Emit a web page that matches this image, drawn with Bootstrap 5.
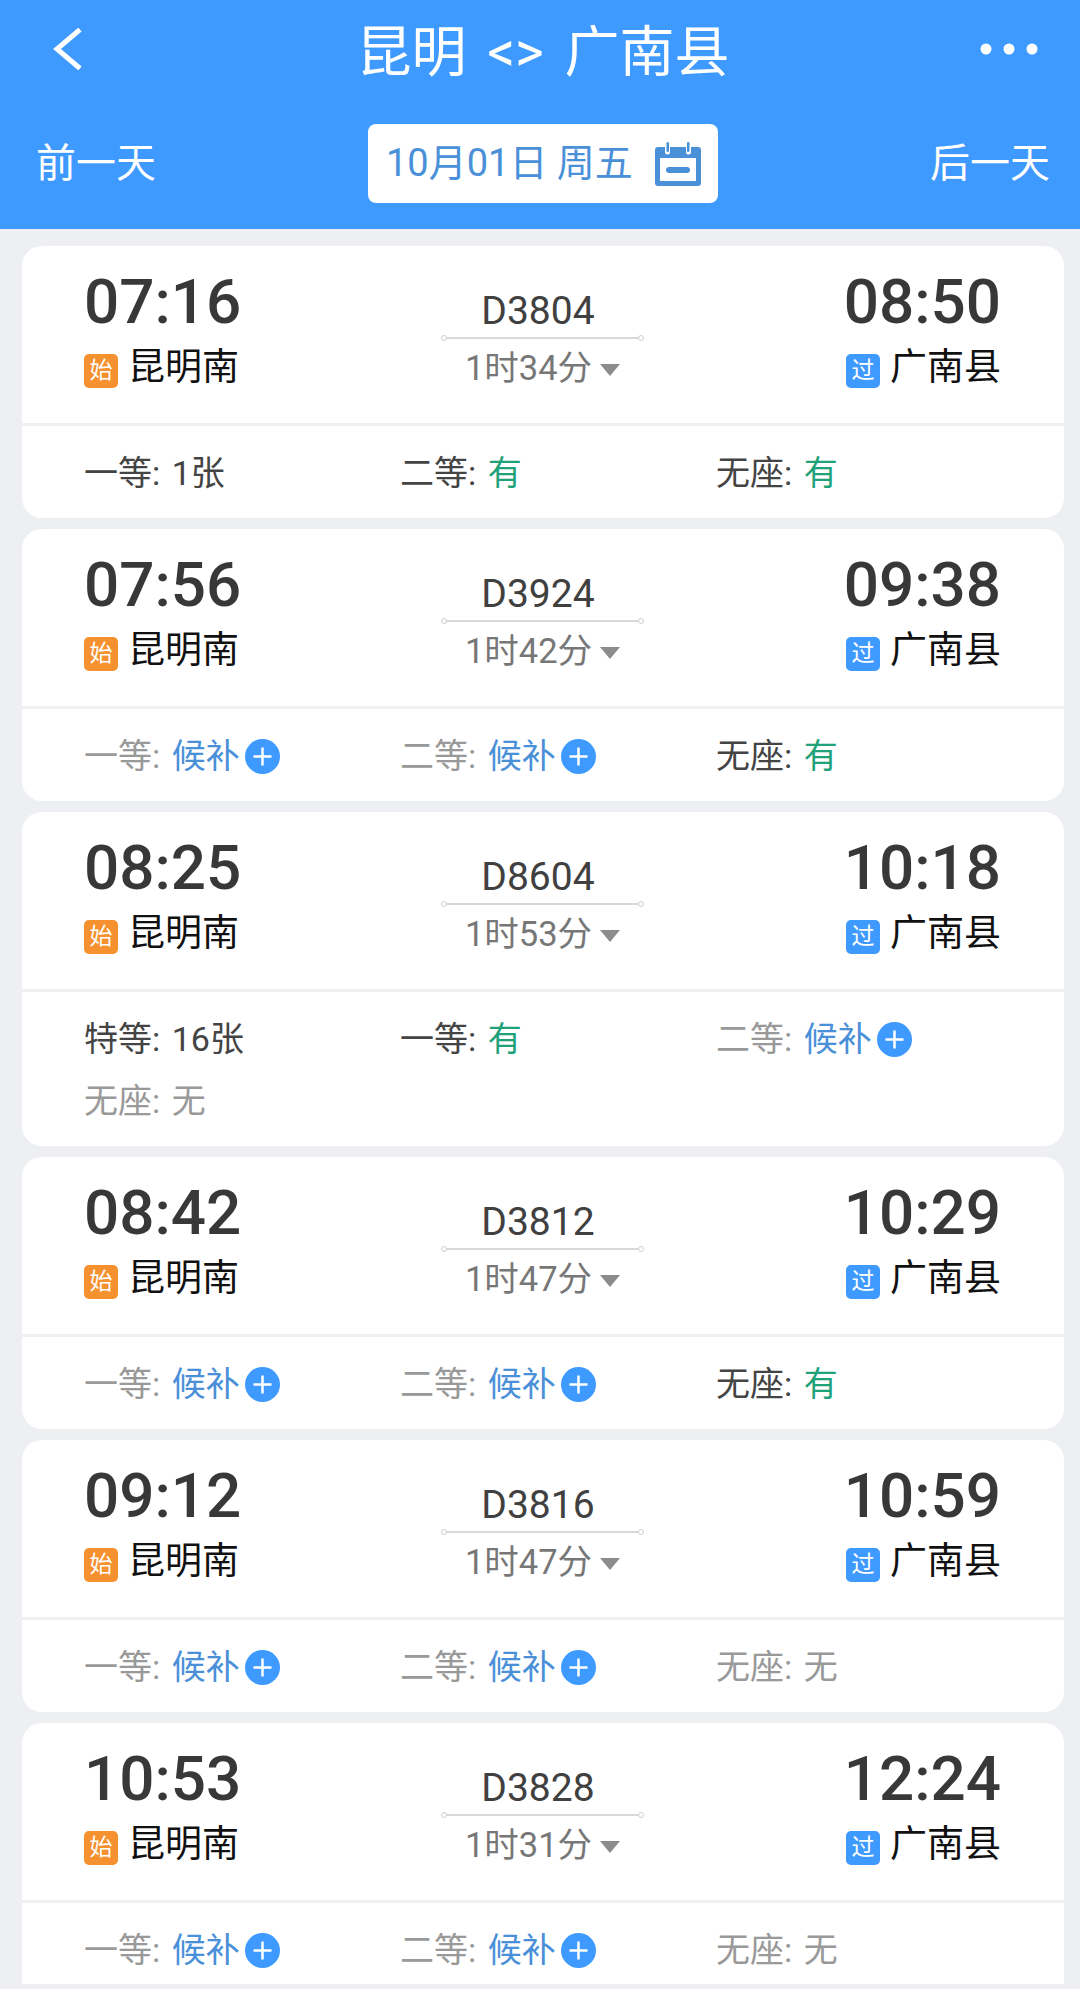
<!DOCTYPE html>
<html lang="zh-CN">
<head>
  <meta charset="UTF-8">
  <title>昆明 &lt;&gt; 广南县</title>
  <link href="https://cdn.jsdelivr.net/npm/bootstrap@5.3.3/dist/css/bootstrap.min.css" rel="stylesheet">
  <script src="https://cdn.jsdelivr.net/npm/bootstrap@5.3.3/dist/js/bootstrap.bundle.min.js"></script>
  <style>
    html, body { height: 1989px; overflow: hidden; }
    body { background: #eeeff3; font-family: Roboto, "Noto Sans CJK SC", sans-serif; color: #333; }
    .top-bar { background: #3e9aff; height: 229px; color: #fff; }
    .title-row { height: 111px; padding: 0 42px 14px 53px; }
    .title-row h1 { font-size: 55px; font-weight: 400; margin: 8px 0 0 24px; line-height: 1; }
    .title-row h1 span { margin: 0 7px; }
    .day-row { height: 105px; padding: 0 30px 0 36px; font-size: 40px; }
    .date-box { width: 350px; height: 79px; background: #fff; border-radius: 8px; color: #4a90d9; font-size: 38px; padding: 0 17px 0 18px; }
    .train-list { padding: 17px 16px 0 22px; gap: 11px; }
    .train-card { border: 0; border-radius: 20px; background: #fff; }
    .train-card:last-child { height: 261px; overflow: hidden; border-radius: 20px 20px 0 0; }
    .train-main { height: 180px; padding: 0 63px 0 62px; border-bottom: 3px solid #f0f0f3; }
    .train-end { width: 300px; }
    .clock { font-size: 62px; font-weight: 500; line-height: 72px; margin-top: 20px; color: #383838; }
    .station { font-size: 37px; line-height: 44px; color: #111; margin-top: 8px; gap: 10px; }
    .stop-tag { width: 34px; height: 34px; border-radius: 5px; color: #fff; font-size: 23px; line-height: 34px; text-align: center; margin-top: 5px; }
    .tag-start { background: #f5912f; }
    .tag-pass { background: #3e9aff; }
    .train-mid { width: 203px; text-align: center; }
    .train-no { font-size: 39px; font-weight: 400; line-height: 42px; margin-top: 44px; padding-right: 9px; color: #404040; }
    .track { height: 2px; background: #d9d9d9; margin: 5px 0 0; position: relative; }
    .track::before, .track::after { content: ""; position: absolute; top: -2px; width: 6px; height: 6px; border: 1px solid #cfcfcf; border-radius: 50%; background: #fff; }
    .track::before { left: 0; }
    .track::after { right: 0; }
    .duration { font-size: 34.500px; line-height: 44px; color: #777; margin-top: 7px; gap: 8px; }
    .down-arrow { width: 0; height: 0; border-left: 10px solid transparent; border-right: 10px solid transparent; border-top: 12px solid #8c8c8c; margin-top: 4px; }
    .seat-wrap { padding: 16px 0 14px 62px; }
    .seat-wrap .row { --bs-gutter-x: 0; width: 948px; }
    .seat { height: 62px; font-size: 34px; color: #444; white-space: nowrap; }
    .seat.off { color: #999; }
    .seat-val { margin-left: 3px; }
    .seat-yes { color: #1fa27a; }
    .seat-wait { color: #4a90d9; }
    .plus-dot { display: inline-flex; width: 35px; height: 35px; margin-left: 5px; }
  </style>
</head>
<body>

<!-- 顶部 -->
<div class="top-bar">
  <div class="title-row d-flex align-items-center justify-content-between">
    <svg width="29" height="42" viewBox="0 0 29 42"><path d="M27 1.500 4 21l23 19.500" fill="none" stroke="#fff" stroke-width="5"/></svg>
    <h1>昆明<span> &lt;&gt; </span>广南县</h1>
    <svg width="58" height="14" viewBox="0 0 58 14" fill="#fff"><circle cx="6" cy="7" r="5.500"/><circle cx="29" cy="7" r="5.500"/><circle cx="52" cy="7" r="5.500"/></svg>
  </div>
  <div class="day-row d-flex align-items-center justify-content-between">
    <span>前一天</span>
    <div class="date-box d-flex align-items-center justify-content-between">
      <span>10月01日 周五</span>
      <svg width="46" height="46" viewBox="0 0 46 46">
        <path d="M3 6h7v5a2.500 2.500 0 0 0 5 0V6h16v5a2.500 2.500 0 0 0 5 0V6h7a3 3 0 0 1 3 3v33a3 3 0 0 1-3 3H3a3 3 0 0 1-3-3V9a3 3 0 0 1 3-3Zm2 11v23h36V17Z" fill="#4a90d9"/>
        <rect x="11" y="26" width="24" height="6" rx="3" fill="#4a90d9"/>
        <rect x="11.500" y="1" width="2.500" height="10" rx="1.200" fill="#4a90d9"/>
        <rect x="32" y="1" width="2.500" height="10" rx="1.200" fill="#4a90d9"/>
      </svg>
    </div>
    <span>后一天</span>
  </div>
</div>

<!-- 车次列表 -->
<div class="train-list d-flex flex-column" id="trainList"></div>

<script>
const trenes = [
  { ini: "07:16", fin: "08:50", no: "D3804", dur: "1时34分", seats: [["一等", "1张"], ["二等", "有"], ["无座", "有"]] },
  { ini: "07:56", fin: "09:38", no: "D3924", dur: "1时42分", seats: [["一等", "候补"], ["二等", "候补"], ["无座", "有"]] },
  { ini: "08:25", fin: "10:18", no: "D8604", dur: "1时53分", seats: [["特等", "16张"], ["一等", "有"], ["二等", "候补"], ["无座", "无"]] },
  { ini: "08:42", fin: "10:29", no: "D3812", dur: "1时47分", seats: [["一等", "候补"], ["二等", "候补"], ["无座", "有"]] },
  { ini: "09:12", fin: "10:59", no: "D3816", dur: "1时47分", seats: [["一等", "候补"], ["二等", "候补"], ["无座", "无"]] },
  { ini: "10:53", fin: "12:24", no: "D3828", dur: "1时31分", seats: [["一等", "候补"], ["二等", "候补"], ["无座", "无"]] }
];

const plus = `<svg class="plus-dot" viewBox="0 0 35 35"><circle cx="17.500" cy="17.500" r="17.500" fill="#3e9aff"/><path d="M17.500 8.500v18M8.500 17.500h18" stroke="#fff" stroke-width="2.500"/></svg>`;

function seatHtml(s) {
  const [clase, valor] = s;
  if (valor === "候补") return `<div class="col-4 seat off d-flex align-items-center"><span>${clase}:&nbsp;<span class="seat-val seat-wait">候补</span></span>${plus}</div>`;
  if (valor === "有") return `<div class="col-4 seat d-flex align-items-center"><span>${clase}:&nbsp;<span class="seat-val seat-yes">有</span></span></div>`;
  if (valor === "无") return `<div class="col-4 seat off d-flex align-items-center"><span>${clase}:&nbsp;<span class="seat-val">无</span></span></div>`;
  return `<div class="col-4 seat d-flex align-items-center"><span>${clase}:&nbsp;<span class="seat-val">${valor}</span></span></div>`;
}

document.getElementById("trainList").innerHTML = trenes.map(t => `
  <div class="card train-card">
    <div class="train-main d-flex justify-content-between flex-shrink-0">
      <div class="train-end">
        <div class="clock">${t.ini}</div>
        <div class="station d-flex align-items-center"><span class="stop-tag tag-start">始</span><span>昆明南</span></div>
      </div>
      <div class="train-mid">
        <div class="train-no">${t.no}</div>
        <div class="track"></div>
        <div class="duration d-flex justify-content-center align-items-center"><span>${t.dur}</span><span class="down-arrow"></span></div>
      </div>
      <div class="train-end d-flex flex-column align-items-end">
        <div class="clock">${t.fin}</div>
        <div class="station d-flex align-items-center"><span class="stop-tag tag-pass">过</span><span>广南县</span></div>
      </div>
    </div>
    <div class="seat-wrap"><div class="row">${t.seats.map(seatHtml).join("")}</div></div>
  </div>`).join("");
</script>

</body>
</html>
